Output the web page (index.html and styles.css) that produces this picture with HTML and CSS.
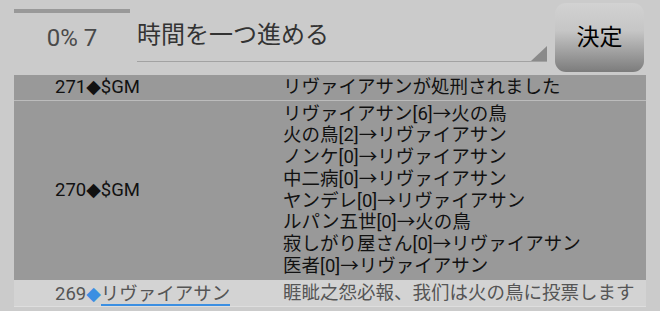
FILE: index.html
```html
<!DOCTYPE html>
<html>
<head>
    <title>Village Log</title>
    <link rel="stylesheet" href="styles.css">
</head>
<body>
    <!-- Top bar: progress, action selector and submit -->
    <div class="header">
        <div class="status">
            <div class="progress"></div>
            <div class="count">0% 7</div>
        </div>
        <div class="field">
            <span class="field-text">時間を一つ進める</span>
            <span class="field-arrow"></span>
        </div>
        <button class="submit">決定</button>
    </div>

    <!-- Game log -->
    <div class="log">
        <div class="row dark">
            <div class="who">271<span class="mark">◆</span>$GM</div>
            <div class="msg">リヴァイアサンが処刑されました</div>
        </div>
        <div class="row dark tall">
            <div class="who">270<span class="mark">◆</span>$GM</div>
            <div class="msg">
                リヴァイアサン[6]→火の鳥<br>
                火の鳥[2]→リヴァイアサン<br>
                ノンケ[0]→リヴァイアサン<br>
                中二病[0]→リヴァイアサン<br>
                ヤンデレ[0]→リヴァイアサン<br>
                ルパン五世[0]→火の鳥<br>
                寂しがり屋さん[0]→リヴァイアサン<br>
                医者[0]→リヴァイアサン
            </div>
        </div>
        <div class="row light">
            <div class="who">269<span class="mark blue">◆</span><span class="name">リヴァイアサン</span></div>
            <div class="msg">睚眦之怨必報、我们は火の鳥に投票します</div>
        </div>
    </div>
</body>
</html>
```

FILE: styles.css
```css
/* Page base */
body {
    margin: 0;
    padding: 0;
    background-color: #cbcbcb;
    font-family: Roboto, "Noto Sans CJK JP", sans-serif;
    color: #111;
}

/* Header bar */
.header {
    display: flex;
    height: 75px;
    padding-left: 14px;
}
.status {
    width: 116px;
}
.progress {
    height: 4px;
    margin-top: 9px;
    background-color: #999;
}
.count {
    margin-top: 11px;
    text-align: center;
    font-size: 24px;
    line-height: 28px;
    color: #4a4a4a;
}
.field {
    display: flex;
    align-items: flex-end;
    width: 410px;
    height: 62px;
    margin-left: 7px;
    border-bottom: 1px solid #a2a2a2;
    box-sizing: border-box;
}
.field-text {
    flex: 1;
    align-self: flex-start;
    padding-top: 20px;
    font-size: 24px;
    line-height: 30px;
    color: #333;
}
.field-arrow {
    width: 0;
    height: 0;
    border-left: 16px solid transparent;
    border-bottom: 15px solid #8a8a8a;
}
.submit {
    width: 89px;
    height: 69px;
    margin: 3px 0 0 8px;
    border: none;
    border-radius: 11px;
    background: linear-gradient(#d2d2d2 0%, #c6c6c6 40%, #7c7c7c 100%);
    font-family: "Noto Sans CJK JP", sans-serif;
    font-size: 23px;
    color: #000;
    padding: 0 0 5px 0;
}

/* Log table */
.log {
    margin: 0 14px;
}
.row {
    display: grid;
    grid-template-columns: 269px 1fr;
    font-size: 18.5px;
    line-height: 21.8px;
}
.row.dark {
    background-color: #999;
}
.row:first-child {
    height: 25px;
    align-items: center;
    border-bottom: 1px solid #bcbcbc;
}
.row.tall {
    padding: 2.5px 0;
    height: 179px;
    box-sizing: border-box;
}
.row.light {
    height: 27px;
    padding-top: 3px;
    background-color: #d3d3d3;
    color: #555;
    border-bottom: 1px solid #dedede;
    box-sizing: border-box;
}
.row.light .who,
.row.light .msg {
    align-self: start;
}
.who {
    padding-left: 41px;
    align-self: center;
    white-space: nowrap;
}
.msg {
    align-self: center;
    white-space: nowrap;
}
.mark {
    font-family: "DejaVu Sans", sans-serif;
    font-size: 19px;
}
.mark.blue {
    color: #3b8fe2;
}
.name {
    display: inline-block;
    border-bottom: 2px solid #3b8fe2;
    line-height: 20px;
}
```
